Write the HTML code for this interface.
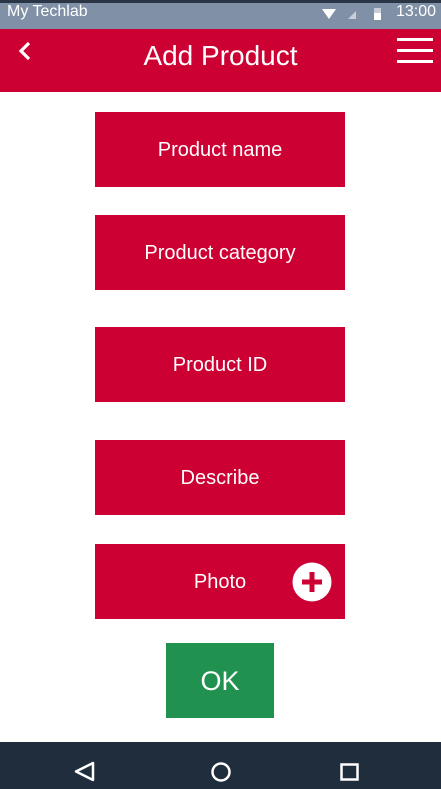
<!DOCTYPE html>
<html><head><style>
*{margin:0;padding:0;box-sizing:border-box}
body{width:441px;height:789px;background:#fff;font-family:"Liberation Sans",Roboto,sans-serif;position:relative;overflow:hidden}
.abs{position:absolute}
.sb{left:0;top:0;width:441px;height:29px;background:#8090a6;border-top:3px solid #2a3545}
.hd{left:0;top:29px;width:441px;height:63px;background:#cc0033}
.btn{position:absolute;left:95px;width:250px;height:75px;background:#cc0033;color:#fff;font-size:20px;display:flex;align-items:center;justify-content:center;padding-top:2px}
.nav{left:0;top:742px;width:441px;height:47px;background:#1f2d3d}
</style></head><body>
<div class="abs sb"></div>
<div class="abs" style="left:7px;top:3px;color:#fff;font-size:16px">My Techlab</div>
<svg class="abs" style="left:322px;top:7px" width="70" height="14"><path d="M0 2 L14 2 L7 12Z" fill="#fff"/><path d="M26 12 L34 4 L34 12Z" fill="#c8ced8"/><rect x="52" y="1" width="7" height="12" fill="#fff"/><rect x="52" y="1" width="7" height="5" fill="#c8ced8"/></svg>
<div class="abs" style="left:396px;top:3px;color:#fff;font-size:16px">13:00</div>
<div class="abs hd"></div>
<svg class="abs" style="left:14px;top:39px" width="20" height="24"><path d="M15 4 L7 12 L15 20" stroke="#fff" stroke-width="3.2" fill="none"/></svg>
<div class="abs" style="left:0;width:441px;top:40px;text-align:center;color:#fff;font-size:28px">Add Product</div>
<svg class="abs" style="left:397px;top:38px" width="36" height="26"><rect x="0" y="0" width="36" height="3" fill="#fff"/><rect x="0" y="11" width="36" height="3" fill="#fff"/><rect x="0" y="22" width="36" height="3" fill="#fff"/></svg>
<div class="btn" style="top:112px">Product name</div>
<div class="btn" style="top:215px">Product category</div>
<div class="btn" style="top:327px">Product ID</div>
<div class="btn" style="top:440px">Describe</div>
<div class="btn" style="top:544px">Photo</div>
<svg class="abs" style="left:292px;top:562px" width="40" height="40"><circle cx="20" cy="20" r="19.5" fill="#fff"/><rect x="17.5" y="10" width="5" height="20" fill="#cc0033"/><rect x="10" y="17.5" width="20" height="5" fill="#cc0033"/></svg>
<div class="btn" style="top:643px;left:166px;width:108px;background:#219150;font-size:27px">OK</div>
<div class="abs nav"></div>
<svg class="abs" style="left:0;top:742px" width="441" height="47"><path d="M93 21 L76 29.5 L93 38Z" fill="none" stroke="#fff" stroke-width="2.5" stroke-linejoin="round"/><circle cx="221" cy="30" r="8.5" fill="none" stroke="#fff" stroke-width="2.5"/><rect x="341.5" y="22.5" width="16" height="15" fill="none" stroke="#fff" stroke-width="2.5"/></svg>
</body></html>
